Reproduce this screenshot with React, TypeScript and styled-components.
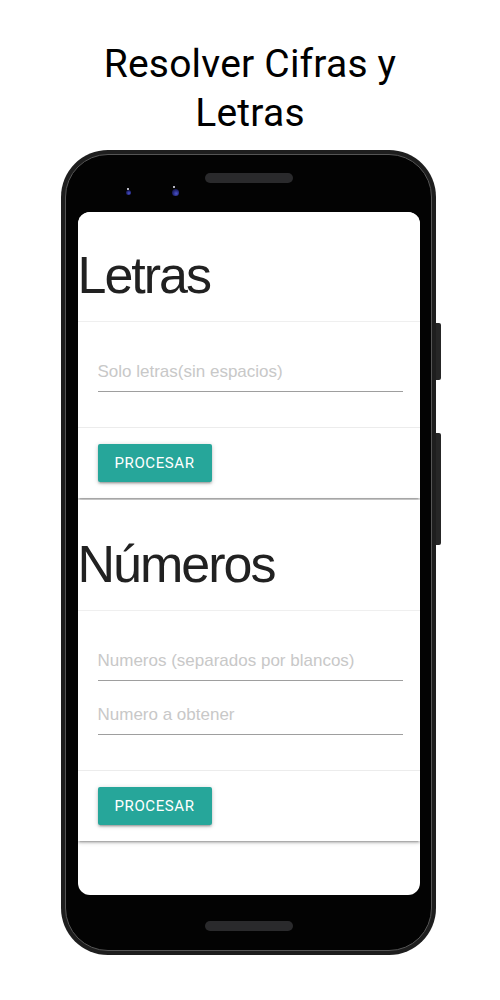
import React from "react";
import styled, { createGlobalStyle } from "styled-components";

const Global = createGlobalStyle`
  html, body { margin: 0; padding: 0; background: #ffffff; }
  body { font-family: Roboto, "Liberation Sans", Arial, sans-serif; }
  * { box-sizing: border-box; }
`;

const Page = styled.div`
  width: 500px;
  height: 1000px;
  display: flex;
  flex-direction: column;
  align-items: flex-start;
  overflow: hidden;
`;

const Title = styled.h1`
  align-self: center;
  width: 340px;
  margin: 0;
  padding-top: 40px;
  font-family: Roboto, sans-serif;
  font-weight: 400;
  font-size: 39px;
  line-height: 49px;
  letter-spacing: 0.2px;
  color: #000;
  text-align: center;
`;

const Frame = styled.div`
  position: relative;
  margin: 12px 0 0 61px;
  width: 375px;
  height: 805px;
  border-radius: 47px;
  background: #1e1e1e;
  padding: 4px;
  display: flex;
`;

const SideButton = styled.div<{ $top: number; $height: number }>`
  position: absolute;
  right: -5px;
  top: ${(p) => p.$top}px;
  width: 5px;
  height: ${(p) => p.$height}px;
  border-radius: 0 2px 2px 0;
  background: #262626;
`;

const Bezel = styled.div`
  flex: 1;
  border-radius: 43px;
  border: 1.5px solid #555555;
  background: #030303;
  display: flex;
  flex-direction: column;
  padding: 0 11.5px;
`;

const TopArea = styled.div`
  height: 56.5px;
  display: flex;
  flex-direction: column;
  padding-top: 18px;
`;

const Speaker = styled.div`
  align-self: center;
  width: 88px;
  height: 10px;
  border-radius: 5px;
  background: #2a2a2c;
`;

const CameraRow = styled.div`
  display: flex;
  align-items: center;
  height: 10px;
  margin-top: 4px;
  padding-left: 48px;
  gap: 41px;
`;

const Camera = styled.div<{ $size: number }>`
  position: relative;
  width: ${(p) => p.$size}px;
  height: ${(p) => p.$size}px;
  border-radius: 50%;
  background: radial-gradient(circle at 60% 65%, #4a52c8 0%, #23277a 50%, #07071a 100%);
  &::after {
    content: "";
    position: absolute;
    left: 25%;
    top: -35%;
    width: 2px;
    height: 2px;
    border-radius: 50%;
    background: #f0f0ff;
  }
`;

const Screen = styled.div`
  height: 683px;
  background: #ffffff;
  border-radius: 12px;
  overflow: hidden;
  display: flex;
  flex-direction: column;
  gap: 2px;
`;

const BottomArea = styled.div`
  flex: 1;
  display: flex;
  flex-direction: column;
  padding-top: 26px;
`;

const Card = styled.section`
  background: #ffffff;
  box-shadow: 0 2px 2px 0 rgba(0, 0, 0, 0.14), 0 3px 1px -2px rgba(0, 0, 0, 0.12),
    0 1px 5px 0 rgba(0, 0, 0, 0.2);
  display: flex;
  flex-direction: column;
`;

const CardTitle = styled.h2<{ $top: number }>`
  margin: 0;
  padding: ${(p) => p.$top}px 0 16px 0;
  font-family: "Liberation Sans", Arial, sans-serif;
  font-weight: 400;
  font-size: 52px;
  line-height: 60px;
  letter-spacing: -2px;
  color: #212121;
  border-bottom: 1px solid #efefef;
`;

const CardContent = styled.div`
  padding: 22px 17px 35px 20px;
  display: flex;
  flex-direction: column;
  gap: 6px;
`;

const Field = styled.input`
  width: 100%;
  height: 48px;
  margin: 0;
  padding: 10px 0 0 0;
  border: none;
  border-bottom: 1px solid #9e9e9e;
  outline: none;
  background: transparent;
  font-family: "Liberation Sans", Arial, sans-serif;
  font-size: 17px;
  color: #333;
  &::placeholder {
    color: #c8c8c8;
  }
`;

const CardAction = styled.div`
  border-top: 1px solid rgba(160, 160, 160, 0.2);
  padding: 16px 20px 16px 20px;
  display: flex;
`;

const Button = styled.button`
  height: 38px;
  padding: 0 17px;
  border: none;
  border-radius: 2px;
  background: #26a69a;
  color: #ffffff;
  font-family: Roboto, sans-serif;
  font-size: 15px;
  font-weight: 400;
  letter-spacing: 0.6px;
  text-transform: uppercase;
  box-shadow: 0 2px 2px 0 rgba(0, 0, 0, 0.14), 0 3px 1px -2px rgba(0, 0, 0, 0.12),
    0 1px 5px 0 rgba(0, 0, 0, 0.2);
  cursor: pointer;
`;

export default function App() {
  return (
    <>
      <Global />
      <Page>
        <Title>Resolver Cifras y Letras</Title>
        <Frame>
          <SideButton $top={173} $height={57} />
          <SideButton $top={283} $height={112} />
          <Bezel>
            <TopArea>
              <Speaker />
              <CameraRow>
                <Camera $size={5} />
                <Camera $size={7} />
              </CameraRow>
            </TopArea>
            <Screen>
              <Card>
                <CardTitle $top={33}>Letras</CardTitle>
                <CardContent>
                  <Field placeholder="Solo letras(sin espacios)" />
                </CardContent>
                <CardAction>
                  <Button>Procesar</Button>
                </CardAction>
              </Card>
              <Card>
                <CardTitle $top={34}>Números</CardTitle>
                <CardContent>
                  <Field placeholder="Numeros (separados por blancos)" />
                  <Field placeholder="Numero a obtener" />
                </CardContent>
                <CardAction>
                  <Button>Procesar</Button>
                </CardAction>
              </Card>
            </Screen>
            <BottomArea>
              <Speaker />
            </BottomArea>
          </Bezel>
        </Frame>
      </Page>
    </>
  );
}
